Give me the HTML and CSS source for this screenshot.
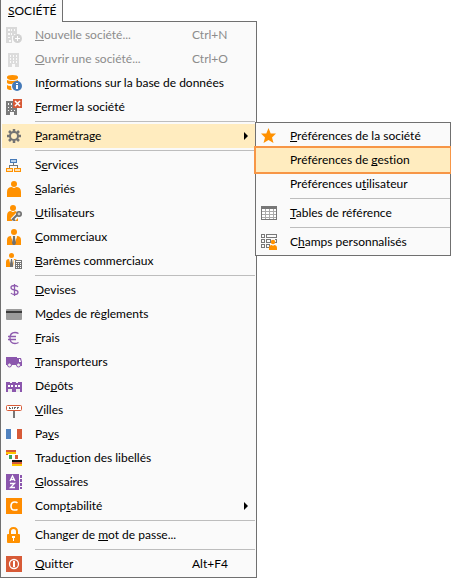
FILE: index.html
```html
<!DOCTYPE html>
<html lang="fr">
<head>
<meta charset="utf-8">
<title>Société</title>
<link rel="stylesheet" href="styles.css">
</head>
<body>
<nav class="menubar">
<button class="tab" type="button"><u>S</u>OCIÉTÉ</button>
<ul class="menu">
<li><button class="item" type="button" disabled>
<svg class="icon" viewBox="0 0 16 16"><path fill="#d9d9d9" fill-rule="evenodd" d="M0 0h11v7H8v2H6v7H0zM2 2v2h2V2zM5 2v2h1V2zM8 2v2h1V2zM2 6v2h2V6zM5 6v2h1V6zM2 10v1h2v-1zM3 13v2h2v-2z"/><circle cx="11.500" cy="11.500" r="4.500" fill="#d2d2d2"/><path d="M11 9h1v2h2v1h-2v2h-1v-2H9v-1h2z" fill="#fff"/></svg>
<span class="label"><u>N</u>ouvelle société...</span><span class="key">Ctrl+N</span></button></li>
<li><button class="item" type="button" disabled>
<svg class="icon" viewBox="0 0 16 16"><path fill="#dcdcdc" fill-rule="evenodd" d="M2 2h11v14H9v-3H6v3H2zM4 4v2h1V4zM7 4v2h1V4zM10 4v2h1V4zM4 7v2h1V7zM7 7v2h1V7zM10 7v2h1V7zM4 10v2h1v-2zM7 10v2h1v-2zM10 10v2h1v-2z"/></svg>
<span class="label"><u>O</u>uvrir une société...</span><span class="key">Ctrl+O</span></button></li>
<li><button class="item" type="button">
<svg class="icon" viewBox="0 0 16 16"><path fill="#ff9100" d="M1 2q0-2 5.500-2T12 2v1q-1 2-5.500 2T1 3zM1 5q2 1 5.500 1T12 5v2q-5 0-6 2Q1 9 1 7.500zM1 10q1 1 4 1 0 3 1 4-5 0-5-2z"/><circle cx="11" cy="11" r="5" fill="#467ab8"/><path d="M10 8h2v1h-2zM10 10h2v4h-2z" fill="#fff"/></svg>
<span class="label">In<u>f</u>ormations sur la base de données</span></button></li>
<li><button class="item" type="button">
<svg class="icon" viewBox="0 0 16 16"><path fill="#7b7b7b" fill-rule="evenodd" d="M0 2h7v7h4v7H8v-3H4v3H0zM2 4v2h1V4zM5 4v2h1V4zM2 8v1h1V8zM5 8v1h1V8zM2 11v1h1v-1zM5 11v1h1v-1zM8 11v1h1v-1z"/><path fill="#d75a37" d="M7 0h9v9H7z"/><path d="m9 2 5 5m0-5L9 7" stroke="#fff" stroke-width="1.500"/></svg>
<span class="label"><u>F</u>ermer la société</span></button></li>
<li class="sep" role="separator"></li>
<li class="branch"><button class="item open" type="button" aria-expanded="true">
<svg class="icon" viewBox="0 0 16 16"><circle cx="8" cy="8" r="4" fill="none" stroke="#737373" stroke-width="2"/><path stroke="#737373" stroke-width="2.500" d="M8 1v3M8 12v3M1 8h3M12 8h3M3 3l2 2M11 11l2 2M3 13l2-2M11 5l2-2"/></svg>
<span class="label"><u>P</u>aramétrage</span><svg class="arrow" viewBox="0 0 4 8"><path d="M0 0l4 4-4 4z"/></svg></button>
<ul class="menu submenu">
<li><button class="item" type="button">
<svg class="icon" viewBox="0 0 16 16"><path fill="#ff9100" d="m7.500 0 2.200 5.500H15l-4 4 1.500 5.500-5-3-5 3L4 9.500l-4-4h5.300z"/></svg>
<span class="label"><u>P</u>références de la société</span></button></li>
<li><button class="item current" type="button"><span class="icon"></span><span class="label">Préférences de <u>g</u>estion</span></button></li>
<li><button class="item" type="button"><span class="icon"></span><span class="label">Préférences u<u>t</u>ilisateur</span></button></li>
<li class="sep" role="separator"></li>
<li><button class="item" type="button">
<svg class="icon" viewBox="0 0 16 16" shape-rendering="crispEdges"><path fill="#fff" d="M0 1h16v14H0z"/><path fill="#777" d="M0 1h16v3H0z"/><path fill="none" stroke="#777" d="M.5 1.500h15v13H.5z"/><path fill="none" stroke="#aaa" d="M4.500 4v10M8.500 4v10M12.500 4v10M1 6.500h14M1 9.500h14M1 12.500h14"/></svg>
<span class="label"><u>T</u>ables de référence</span></button></li>
<li class="sep" role="separator"></li>
<li><button class="item" type="button">
<svg class="icon" viewBox="0 0 16 16"><path fill="none" stroke="#777" shape-rendering="crispEdges" d="M.5 .5h3v3h-3zM5.500 .5h10v3h-10zM.5 5.500h3v3h-3zM5.500 5.500h4v3h-4zM.5 10.500h3v3h-3zM5.500 10.500h3v3h-3zM14 5.500h1.500v3H14"/><circle cx="12" cy="8" r="2.200" fill="#ff9100"/><path fill="#ff9100" d="M8 16v-2q0-3 3-3l1 1 1-1q3 0 3 3v2z"/></svg>
<span class="label">C<u>h</u>amps personnalisés</span></button></li>
</ul></li>
<li class="sep" role="separator"></li>
<li><button class="item" type="button">
<svg class="icon" viewBox="0 0 16 16" shape-rendering="crispEdges"><path fill="#b9d2ee" stroke="#467ab8" d="M4.500 2.500h6v3h-6z"/><path fill="none" stroke="#777" d="M7.500 6v2.500M3.500 11V8.500h8V11"/><path fill="#ffe2b5" stroke="#ff9100" d="M.5 11.500h6v3h-6zM8.500 11.500h6v3h-6z"/></svg>
<span class="label">S<u>e</u>rvices</span></button></li>
<li><button class="item" type="button">
<svg class="icon" viewBox="0 0 16 16"><circle cx="8" cy="3" r="3" fill="#ff9100"/><path fill="#ff9100" d="M1 16v-5q0-5 5-5 2 2 4 0 5 0 5 5v5z"/></svg>
<span class="label"><u>S</u>alariés</span></button></li>
<li><button class="item" type="button">
<svg class="icon" viewBox="0 0 16 16"><circle cx="7" cy="3" r="3" fill="#ff9100"/><path fill="#ff9100" d="M1 16v-5q0-5 4-5 2 2 4 0l2 1-5 7v2zM9 16l3-3v3z"/><path d="m6 15 6-6" stroke="#fafafa" stroke-width="4"/><path d="m6 15 6-6m-5 5 2 2" stroke="#707070" stroke-width="2"/><circle cx="13" cy="9" r="2.200" fill="#ccc" stroke="#707070" stroke-width="1.600"/></svg>
<span class="label"><u>U</u>tilisateurs</span></button></li>
<li><button class="item" type="button">
<svg class="icon" viewBox="0 0 16 16"><circle cx="8" cy="3" r="3" fill="#ff9100"/><path fill="#ff9100" d="M1 16v-5q0-4 4-4l2 6v3zM15 16v-5q0-4-4-4l-2 6v3z"/><path fill="#fff0d6" d="M5 7h6l-2 7v2H7v-2z"/><path fill="#707070" d="M7 7h2v2l1 5-1 2H7l-1-2 1-5z"/></svg>
<span class="label"><u>C</u>ommerciaux</span></button></li>
<li><button class="item" type="button">
<svg class="icon" viewBox="0 0 16 16"><circle cx="5.500" cy="2.500" r="2.500" fill="#ff9100"/><path fill="#ff9100" d="M0 14V9q0-3 3-3l2 8zM8 6q2 0 3 1H8l-1 7H6z"/><path fill="#707070" d="M5 6h1l1 5v3H4v-3z"/><path fill="#747474" d="M9 7h7v9H9z"/><path fill="#fff" d="M10 8h5v1h-5zM10 10h1v1h-1zM12 10h1v1h-1zM14 10h1v1h-1zM10 12h1v1h-1zM12 12h1v1h-1zM14 12h1v1h-1zM10 14h1v1h-1zM12 14h1v1h-1zM14 14h1v1h-1z"/></svg>
<span class="label"><u>B</u>arèmes commerciaux</span></button></li>
<li class="sep" role="separator"></li>
<li><button class="item" type="button">
<svg class="icon" viewBox="0 0 16 16"><path fill="none" stroke="#8e5bae" stroke-width="1.300" d="M8.500 2v12M12 5Q11 3.500 8.500 3.500 5 3.500 5 5.500T8.500 8 12 10.200q0 2.300-3.500 2.300Q6 12.500 5 11"/></svg>
<span class="label"><u>D</u>evises</span></button></li>
<li><button class="item" type="button">
<svg class="icon" viewBox="0 0 16 16"><rect y="3" width="16" height="11" rx="1" fill="#9b9b9b"/><path fill="#3c3c3c" d="M0 5h16v2H0z"/></svg>
<span class="label">M<u>o</u>des de règlements</span></button></li>
<li><button class="item" type="button">
<svg class="icon" viewBox="0 0 16 16"><path fill="none" stroke="#8e5bae" stroke-width="1.300" d="M12.500 3.500Q11 2.500 9 2.500q-5 0-5 5.500t5 5.500q2 0 3.500-1M2 6.500h8M2 9.500h8"/></svg>
<span class="label"><u>F</u>rais</span></button></li>
<li><button class="item" type="button">
<svg class="icon" viewBox="0 0 16 16"><path fill="#8b56ad" d="M0 3h11v8H0zM11 4h4l1 4v4h-5z"/><path fill="#fff" d="M13 5h1l1 3h-2z"/><g fill="#eee" stroke="#8b56ad"><circle cx="3.500" cy="11" r="2"/><circle cx="12.500" cy="11" r="2"/></g></svg>
<span class="label"><u>T</u>ransporteurs</span></button></li>
<li><button class="item" type="button">
<svg class="icon" viewBox="0 0 16 16" shape-rendering="crispEdges"><path fill="#8b56ad" d="M0 4h4v1h2V4h4v1h2V4h4v10H0z"/><path fill="#fff" d="M2 7h2v2H2zM5 7h2v2H5zM9 7h2v2H9zM12 7h2v2h-2z"/><path fill="#eee" d="M2 11h4v3H2zM10 11h4v3h-4z"/></svg>
<span class="label">Dé<u>p</u>ôts</span></button></li>
<li><button class="item" type="button">
<svg class="icon" viewBox="0 0 16 16"><rect x=".5" y="3.500" width="15" height="5" rx="1" fill="#fff" stroke="#d75a37"/><path fill="#777" d="M7 9h2v7H7z"/><path fill="none" stroke="#666" shape-rendering="crispEdges" d="M3.500 5v2M4 6.500h1M6.500 5v2M8.500 5v2M9 5.500h1M11.500 5v2M12 5.500h1"/></svg>
<span class="label"><u>V</u>illes</span></button></li>
<li><button class="item" type="button">
<svg class="icon" viewBox="0 0 16 16"><path fill="#5182bf" d="M0 3h5v10H0z"/><path fill="#fff" d="M5 3h6v10H5z"/><path fill="#d75a37" d="M11 3h5v10h-5z"/></svg>
<span class="label">Pa<u>y</u>s</span></button></li>
<li><button class="item" type="button">
<svg class="icon" viewBox="0 0 16 16"><path fill="#d75a37" d="M0 0h10v2H0zM0 4h10v1H0z"/><path fill="#ffc400" d="M0 2h10v2H0z"/><path fill="#fff" d="M2 4h12v6H2z"/><path fill="#39a35b" d="M3 5h3v4H3z"/><path fill="#d75a37" d="M9 5h3v4H9z"/><path fill="#111" d="M6 10h10v2H6z"/><path fill="#d75a37" d="M6 12h10v2H6z"/><path fill="#ffc400" d="M6 14h10v2H6z"/></svg>
<span class="label">Tradu<u>c</u>tion des libellés</span></button></li>
<li><button class="item" type="button">
<svg class="icon" viewBox="0 0 16 16"><path fill="#8b56ad" d="M0 0h13v16H0zM14 1h2v3h-2zM14 5h2v3h-2zM14 9h2v3h-2zM14 13h2v2h-2z"/><path fill="none" stroke="#fff" stroke-width="1.300" d="M4 7l2.500-5L9 7M5 5.500h3M4 9.500h4.500l-4 4H9"/></svg>
<span class="label"><u>G</u>lossaires</span></button></li>
<li><button class="item" type="button">
<svg class="icon" viewBox="0 0 16 16"><path fill="#ff8c00" d="M0 0h16v16H0z"/><path fill="none" stroke="#fff" stroke-width="1.600" d="M11.500 4.800q-1-.8-2.700-.8Q5 4 5 8.200T8.800 12q1.700 0 2.700-.7"/></svg>
<span class="label">Comp<u>t</u>abilité</span><svg class="arrow" viewBox="0 0 4 8"><path d="M0 0l4 4-4 4z"/></svg></button></li>
<li class="sep" role="separator"></li>
<li><button class="item" type="button">
<svg class="icon" viewBox="0 0 16 16"><path fill="none" stroke="#ff9100" stroke-width="2" d="M4 8V4.500Q4 1 7.500 1T11 4.500V8"/><rect x="1" y="7" width="13" height="9" rx="1" fill="#ff9100"/><path fill="#fff" d="M6 9h3v2H8v3H7v-3H6z"/></svg>
<span class="label">Changer de <u>m</u>ot de passe...</span></button></li>
<li class="sep" role="separator"></li>
<li><button class="item" type="button">
<svg class="icon" viewBox="0 0 16 16"><path fill="#d75a37" d="M0 0h16v16H0z"/><circle cx="8" cy="8" r="4.500" fill="none" stroke="#fff" stroke-width="1.300"/><path fill="#fff" d="M7 5h2v6H7z"/></svg>
<span class="label"><u>Q</u>uitter</span><span class="key">Alt+F4</span></button></li>
</ul>
</nav>
</body>
</html>
```
FILE: styles.css
```css
* { box-sizing: border-box; }
body {
  margin: 0;
  background: #fff;
  color: #000;
  font: 12px/16px Lato, "Open Sans", sans-serif;
  font-variant-ligatures: none;
}
button { font: inherit; font-variant-ligatures: none; color: inherit; }
u { text-underline-offset: 1px; text-decoration-thickness: 1px; text-decoration-skip-ink: none; }
.menubar {
  display: flex;
  flex-direction: column;
  align-items: flex-start;
}
.tab {
  position: relative;
  z-index: 1;
  margin: 0 0 -1px;
  padding: 3px 6px 3px 7px;
  border: 1px solid #707070;
  border-width: 0 1px;
  background: #fafafa;
}
.menu {
  min-width: 257px;
  margin: 0;
  padding: 1px;
  border: 1px solid #707070;
  background: #fafafa;
  list-style: none;
}
.item {
  display: flex;
  align-items: center;
  width: 100%;
  height: 24px;
  padding: 0 0 0 4px;
  border: 0;
  background: none;
  text-align: left;
  white-space: nowrap;
}
.item:disabled { color: #8c8c8c; }
.icon { flex: none; width: 16px; height: 16px; margin-right: 13px; }
.label { flex: 1; }
.key { width: 63px; }
.arrow { width: 4px; height: 8px; margin-right: 7px; }
.sep { height: 1px; margin: 2px 0 2px 33px; background: #bdbdbd; }
.branch { position: relative; }
.open, .current { background: #ffecbf; }
.submenu {
  position: absolute;
  top: -2px;
  left: 100%;
  min-width: 196px;
  padding: 1px 0;
}
.submenu .item { padding-left: 5px; }
.submenu .sep { margin-left: 34px; }
.current { position: relative; outline: 2px solid #f79646; }
```
